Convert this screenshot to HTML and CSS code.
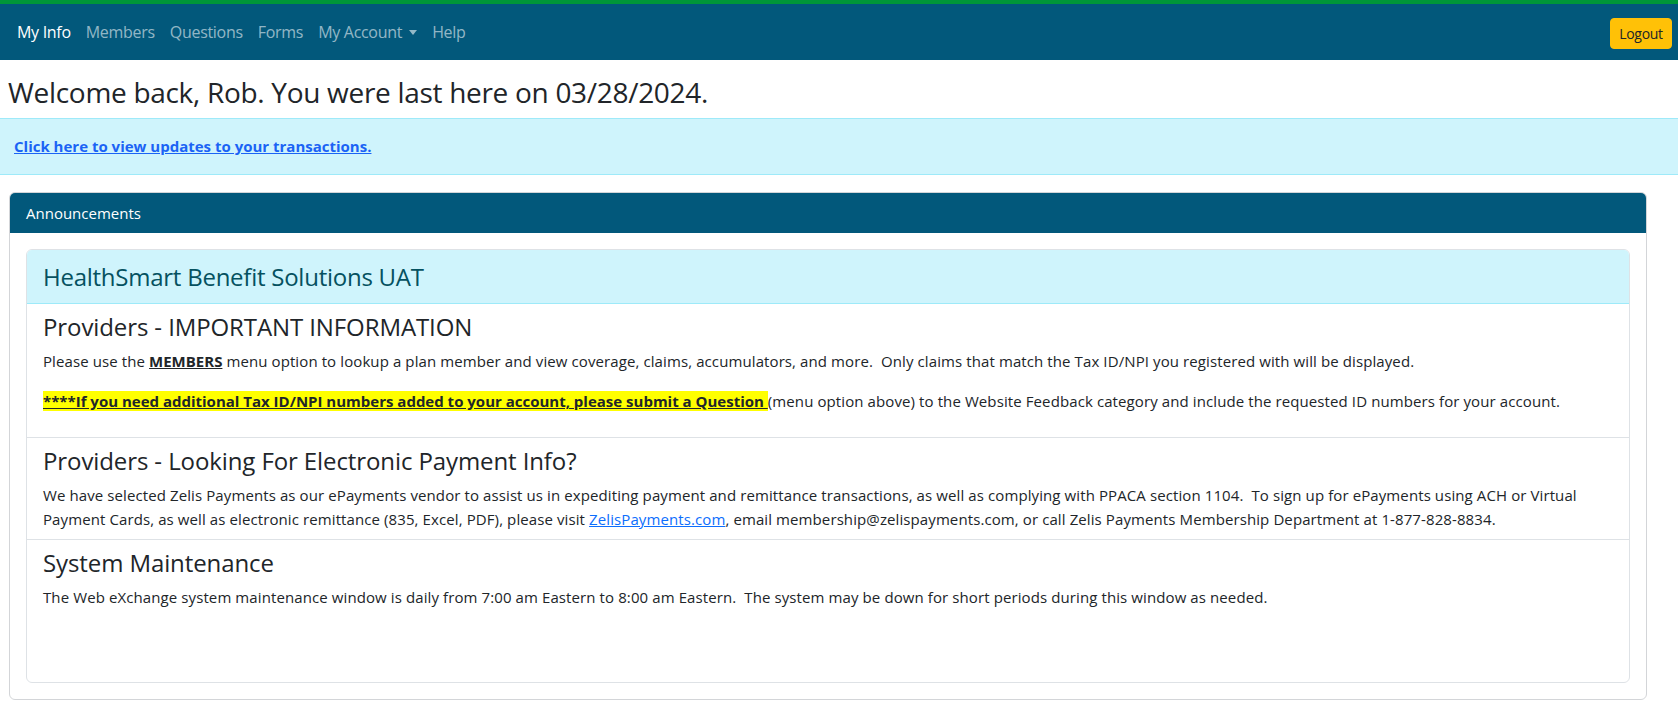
FILE: index.html
```html
<!DOCTYPE html>
<html lang="en">
<head>
<meta charset="utf-8">
<title>My Info</title>
<link rel="stylesheet" href="styles.css">
</head>
<body>
<nav class="navbar">
  <ul class="nav-list">
    <li><a class="nav-link active" href="#">My Info</a></li>
    <li><a class="nav-link" href="#">Members</a></li>
    <li><a class="nav-link" href="#">Questions</a></li>
    <li><a class="nav-link" href="#">Forms</a></li>
    <li><a class="nav-link dropdown-toggle" href="#">My Account</a></li>
    <li><a class="nav-link" href="#">Help</a></li>
  </ul>
  <button class="btn-logout" type="button">Logout</button>
</nav>

<main class="page">
  <h3 class="welcome">Welcome back, Rob. You were last here on 03/28/2024.</h3>

  <div class="alert-info">
    <a class="alert-link" href="#">Click here to view updates to your transactions.</a>
  </div>

  <section class="card">
    <div class="card-header">Announcements</div>
    <div class="card-body">
      <div class="inner-card">
        <div class="inner-header">HealthSmart Benefit Solutions UAT</div>
        <div class="item">
          <h4 class="item-title">Providers - IMPORTANT INFORMATION</h4>
          <p>Please use the <b class="u">MEMBERS</b> menu option to lookup a plan member and view coverage, claims, accumulators, and more.&nbsp; Only claims that match the Tax ID/NPI you registered with will be displayed.</p>
          <p><b class="u highlight">****If you need additional Tax ID/NPI numbers added to your account, please submit a Question </b>(menu option above) to the Website Feedback category and include the requested ID numbers for your account.</p>
        </div>
        <div class="item">
          <h4 class="item-title">Providers - Looking For Electronic Payment Info?</h4>
          <p class="last">We have selected Zelis Payments as our ePayments vendor to assist us in expediting payment and remittance transactions, as well as complying with PPACA section 1104.&nbsp; To sign up for ePayments using ACH or Virtual Payment Cards, as well as electronic remittance (835, Excel, PDF), please visit <a class="link" href="#">ZelisPayments.com</a>, email membership@zelispayments.com, or call Zelis Payments Membership Department at 1-877-828-8834.</p>
        </div>
        <div class="item item-final">
          <h4 class="item-title">System Maintenance</h4>
          <p class="last">The Web eXchange system maintenance window is daily from 7:00 am Eastern to 8:00 am Eastern.&nbsp; The system may be down for short periods during this window as needed.</p>
        </div>
      </div>
    </div>
  </section>
</main>
</body>
</html>
```

FILE: styles.css
```css
* { box-sizing: border-box; }

html, body {
  margin: 0;
  padding: 0;
  background: #ffffff;
}

body {
  font-family: "Open Sans", "Noto Sans", "Liberation Sans", sans-serif;
  font-size: 15px;
  line-height: 24px;
  color: #212529;
  letter-spacing: 0.1px;
}

/* ---------- navbar ---------- */
.navbar {
  display: flex;
  align-items: center;
  justify-content: space-between;
  height: 60px;
  background: #02587b;
  border-top: 4px solid #009639;
  padding: 0 6px 0 9.5px;
}

.nav-list {
  display: flex;
  list-style: none;
  margin: 0;
  padding: 0;
}

.nav-link {
  display: inline-block;
  padding: 8px 7.5px;
  font-size: 16px;
  line-height: 24px;
  letter-spacing: -0.3px;
  color: rgba(255, 255, 255, 0.58);
  text-decoration: none;
}

.nav-link.active { color: #ffffff; }

.dropdown-toggle::after {
  content: "";
  display: inline-block;
  margin-left: 7px;
  vertical-align: 3px;
  border-top: 5px solid;
  border-right: 4.5px solid transparent;
  border-left: 4.5px solid transparent;
}

.btn-logout {
  font-family: inherit;
  font-size: 14px;
  letter-spacing: -0.3px;
  line-height: 21px;
  padding: 4px 6px;
  height: 31px;
  width: 62px;
  color: #212529;
  background: #ffc107;
  border: 1px solid #ffc107;
  border-radius: 4px;
  margin-top: 2px;
}

/* ---------- page ---------- */
.page {
  padding-top: 15px;
}

.welcome {
  margin: 0 0 9px 8px;
  font-size: 28px;
  line-height: 34px;
  font-weight: 500;
  letter-spacing: -0.3px;
}

.alert-info {
  background: #cff4fc;
  border-top: 1px solid #9eeaf9;
  border-bottom: 1px solid #9eeaf9;
  padding: 16px 14px;
  line-height: 23px;
}

.alert-link {
  color: #1b63f5;
  font-weight: 700;
  letter-spacing: 0;
  text-decoration: underline;
}

/* ---------- card ---------- */
.card {
  margin: 17px 31px 0 9px;
  border: 1px solid #d3d5d8;
  border-radius: 6px;
  overflow: hidden;
}

.card-header {
  background: #02587b;
  color: #ffffff;
  padding: 8px 16px;
  line-height: 24px;
  font-size: 15px;
  letter-spacing: 0;
}

.card-body {
  padding: 16px 16px;
}

.inner-card {
  border: 1px solid #dee2e6;
  border-radius: 6px;
  overflow: hidden;
}

.inner-header {
  background: #cff4fc;
  border-bottom: 1px solid #9eeaf9;
  color: #055160;
  font-size: 24px;
  line-height: 29px;
  font-weight: 500;
  padding: 12px 16px;
  letter-spacing: -0.25px;
}

.item {
  padding: 8px 16px;
  border-top: 1px solid #dee2e6;
}

.inner-header + .item { border-top: 0; }

.item-final { padding-bottom: 73px; }

.item-title {
  margin: 0 0 8px;
  font-size: 24px;
  line-height: 29px;
  font-weight: 500;
  letter-spacing: -0.1px;
}

.item p {
  margin: 0 0 16px;
}

.item p.last { margin-bottom: 0; }

.u { text-decoration: underline; font-weight: 700; letter-spacing: 0; }

.highlight { background: #ffff00; }

.link { color: #0d6efd; text-decoration: underline; }
```
